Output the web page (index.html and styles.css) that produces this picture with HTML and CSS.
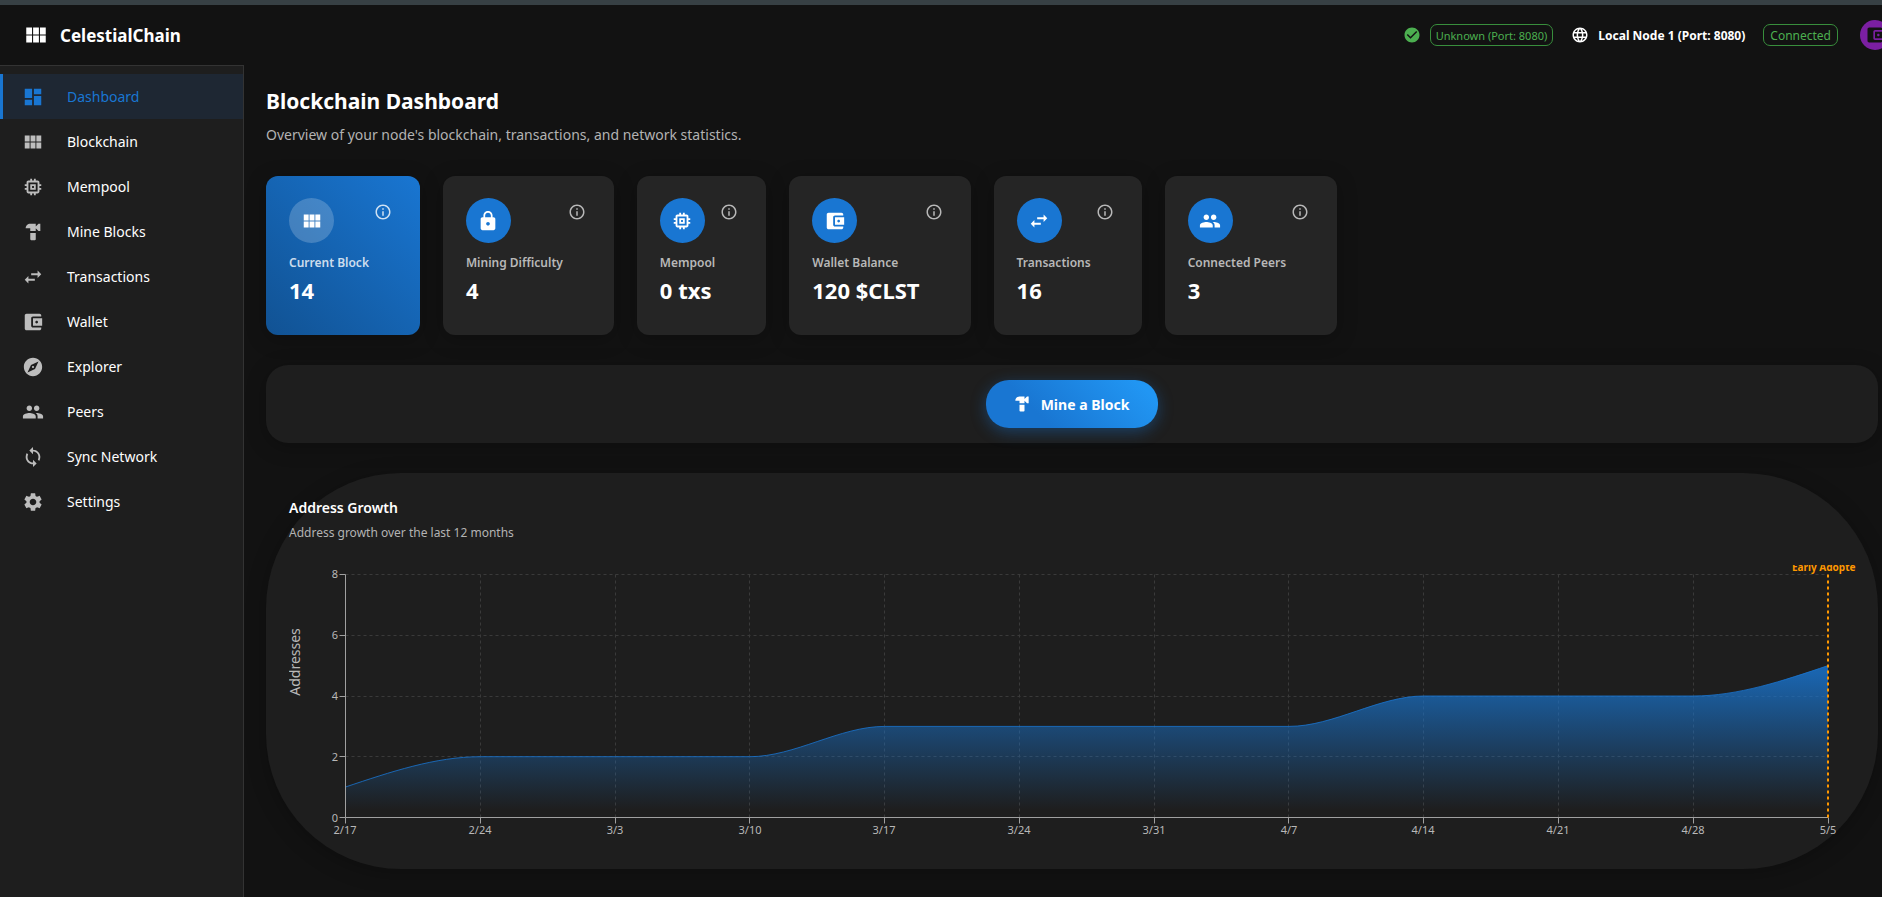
FILE: index.html
```html
<!DOCTYPE html>
<html lang="en">
<head>
<meta charset="utf-8">
<meta name="viewport" content="width=device-width, initial-scale=1">
<title>CelestialChain</title>
<link rel="stylesheet" href="styles.css">
</head>
<body>
<svg class="sprite" aria-hidden="true">
  <symbol id="i-dashboard" viewBox="0 0 24 24"><path d="M3 13h8V3H3v10zm0 8h8v-6H3v6zm10 0h8V11h-8v10zm0-18v6h8V3h-8z"/></symbol>
  <symbol id="i-blocks" viewBox="0 0 24 24"><path d="M14.67 5v6.5H9.33V5h5.34zm1 6.5H21V5h-5.33v6.5zm-1 7.5v-6.5H9.33V19h5.34zm1-6.5V19H21v-6.5h-5.33zm-7.34 0H3V19h5.33v-6.5zm0-1V5H3v6.5h5.33z"/></symbol>
  <symbol id="i-memory" viewBox="0 0 24 24"><path d="M15 9H9v6h6V9zm-2 4h-2v-2h2v2zm8-2V9h-2V7c0-1.100-.9-2-2-2h-2V3h-2v2h-2V3H9v2H7c-1.100 0-2 .9-2 2v2H3v2h2v2H3v2h2v2c0 1.100.9 2 2 2h2v2h2v-2h2v2h2v-2h2c1.100 0 2-.9 2-2v-2h2v-2h-2v-2h2zm-4 6H7V7h10v10z"/></symbol>
  <symbol id="i-hammer" viewBox="0 0 24 24"><path d="m18 3-3 3V3H9C6.240 3 4 5.240 4 8h5v3h6V8l3 3h2V3zM9 13v7c0 .55.45 1 1 1h4c.55 0 1-.45 1-1v-7z"/></symbol>
  <symbol id="i-swap" viewBox="0 0 24 24"><path d="M6.990 11 3 15l3.990 4v-3H14v-2H6.990v-3zM21 9l-3.990-4v3H10v2h7.010v3L21 9z"/></symbol>
  <symbol id="i-wallet" viewBox="0 0 24 24"><path d="M21 18v1c0 1.100-.9 2-2 2H5c-1.110 0-2-.9-2-2V5c0-1.100.89-2 2-2h14c1.100 0 2 .9 2 2v1h-9c-1.110 0-2 .9-2 2v8c0 1.100.89 2 2 2h9zm-9-2h10V8H12v8zm4-2.500c-.83 0-1.500-.67-1.500-1.500s.67-1.500 1.500-1.500 1.500.67 1.500 1.500-.67 1.500-1.500 1.500z"/></symbol>
  <symbol id="i-explore" viewBox="0 0 24 24"><path d="M12 10.900c-.61 0-1.100.49-1.100 1.100s.49 1.100 1.100 1.100c.61 0 1.100-.49 1.100-1.100s-.49-1.100-1.100-1.100zM12 2C6.480 2 2 6.480 2 12s4.480 10 10 10 10-4.480 10-10S17.520 2 12 2zm2.190 12.190L6 18l3.810-8.190L18 6l-3.810 8.190z"/></symbol>
  <symbol id="i-people" viewBox="0 0 24 24"><path d="M16 11c1.660 0 2.990-1.340 2.990-3S17.660 5 16 5c-1.660 0-3 1.340-3 3s1.340 3 3 3zm-8 0c1.660 0 2.990-1.340 2.990-3S9.660 5 8 5C6.340 5 5 6.340 5 8s1.340 3 3 3zm0 2c-2.330 0-7 1.170-7 3.500V19h14v-2.500c0-2.330-4.670-3.500-7-3.500zm8 0c-.29 0-.62.02-.97.05 1.160.84 1.970 1.970 1.970 3.450V19h6v-2.500c0-2.330-4.670-3.500-7-3.500z"/></symbol>
  <symbol id="i-sync" viewBox="0 0 24 24"><path d="M12 4V1L8 5l4 4V6c3.310 0 6 2.690 6 6 0 1.010-.25 1.970-.7 2.800l1.460 1.460C19.540 15.030 20 13.570 20 12c0-4.420-3.580-8-8-8zm0 14c-3.310 0-6-2.690-6-6 0-1.010.25-1.970.7-2.800L5.240 7.740C4.460 8.970 4 10.430 4 12c0 4.420 3.580 8 8 8v3l4-4-4-4v3z"/></symbol>
  <symbol id="i-settings" viewBox="0 0 24 24"><path d="M19.140 12.940c.04-.3.06-.61.06-.94 0-.32-.02-.64-.07-.94l2.030-1.580c.18-.14.23-.41.12-.61l-1.920-3.320c-.12-.22-.37-.29-.59-.22l-2.390.96c-.5-.38-1.030-.7-1.620-.94l-.36-2.540c-.04-.24-.24-.41-.48-.41h-3.840c-.24 0-.43.17-.47.41l-.36 2.540c-.59.24-1.130.57-1.620.94l-2.390-.96c-.22-.08-.47 0-.59.22L2.740 8.870c-.12.21-.08.47.12.61l2.030 1.580c-.05.3-.09.63-.09.94s.02.64.07.94l-2.030 1.580c-.18.14-.23.41-.12.61l1.920 3.320c.12.22.37.29.59.22l2.390-.96c.5.38 1.030.7 1.620.94l.36 2.540c.05.24.24.41.48.41h3.840c.24 0 .44-.17.47-.41l.36-2.540c.59-.24 1.130-.56 1.620-.94l2.390.96c.22.08.47 0 .59-.22l1.920-3.320c.12-.22.07-.47-.12-.61l-2.010-1.580zM12 15.600c-1.980 0-3.600-1.620-3.600-3.600s1.620-3.600 3.600-3.600 3.600 1.620 3.600 3.600-1.620 3.600-3.600 3.600z"/></symbol>
  <symbol id="i-lock" viewBox="0 0 24 24"><path d="M18 8h-1V6c0-2.760-2.240-5-5-5S7 3.240 7 6v2H6c-1.100 0-2 .9-2 2v10c0 1.100.9 2 2 2h12c1.100 0 2-.9 2-2V10c0-1.100-.9-2-2-2zm-6 9c-1.100 0-2-.9-2-2s.9-2 2-2 2 .9 2 2-.9 2-2 2zm3.100-9H8.900V6c0-1.710 1.390-3.100 3.100-3.100 1.710 0 3.100 1.390 3.100 3.100v2z"/></symbol>
  <symbol id="i-info" viewBox="0 0 24 24"><path d="M11 7h2v2h-2zm0 4h2v6h-2zm1-9C6.480 2 2 6.480 2 12s4.480 10 10 10 10-4.480 10-10S17.520 2 12 2zm0 18c-4.410 0-8-3.590-8-8s3.590-8 8-8 8 3.590 8 8-3.590 8-8 8z"/></symbol>
  <symbol id="i-check" viewBox="0 0 24 24"><path d="M12 2C6.480 2 2 6.480 2 12s4.480 10 10 10 10-4.480 10-10S17.520 2 12 2zm-2 15-5-5 1.410-1.410L10 14.170l7.590-7.590L19 8l-9 9z"/></symbol>
  <symbol id="i-globe" viewBox="0 0 24 24"><path d="M11.990 2C6.470 2 2 6.480 2 12s4.470 10 9.990 10C17.520 22 22 17.520 22 12S17.520 2 11.990 2zm6.930 6h-2.950c-.32-1.250-.78-2.450-1.380-3.560 1.840.63 3.370 1.910 4.330 3.560zM12 4.040c.83 1.200 1.480 2.530 1.910 3.960h-3.820c.43-1.430 1.080-2.760 1.910-3.960zM4.260 14C4.100 13.360 4 12.690 4 12s.1-1.360.26-2h3.380c-.08.66-.14 1.320-.14 2s.06 1.340.14 2H4.260zm.82 2h2.950c.32 1.250.78 2.450 1.380 3.560-1.840-.63-3.370-1.900-4.330-3.560zm2.950-8H5.080c.96-1.660 2.490-2.930 4.330-3.560C8.810 5.550 8.350 6.750 8.030 8zM12 19.960c-.83-1.200-1.480-2.530-1.910-3.960h3.820c-.43 1.430-1.080 2.760-1.910 3.960zM14.340 14H9.660c-.09-.66-.16-1.320-.16-2s.07-1.350.16-2h4.680c.09.65.16 1.320.16 2s-.07 1.340-.16 2zm.25 5.560c.6-1.110 1.060-2.310 1.380-3.560h2.950c-.96 1.650-2.490 2.930-4.330 3.560zM16.360 14c.08-.66.14-1.320.14-2s-.06-1.340-.14-2h3.380c.16.64.26 1.310.26 2s-.1 1.360-.26 2h-3.380z"/></symbol>
</svg>

<header class="topbar">
  <div class="brand">
    <svg class="icon icon-xl"><use href="#i-blocks"/></svg>
    <span class="brand-name">CelestialChain</span>
  </div>
  <div class="status">
    <div class="status-group">
      <svg class="icon icon-sm ok"><use href="#i-check"/></svg>
      <span class="chip chip-small">Unknown (Port: 8080)</span>
    </div>
    <div class="status-group">
      <svg class="icon icon-sm"><use href="#i-globe"/></svg>
      <span class="node-name">Local Node 1 (Port: 8080)</span>
    </div>
    <span class="chip">Connected</span>
    <button class="avatar" type="button" aria-label="Wallet"><svg class="icon icon-md"><use href="#i-wallet"/></svg></button>
  </div>
</header>

<div class="layout">
  <nav class="sidebar">
    <a class="nav-item active" href="#dashboard"><svg class="icon icon-lg"><use href="#i-dashboard"/></svg>Dashboard</a>
    <a class="nav-item" href="#blockchain"><svg class="icon icon-lg"><use href="#i-blocks"/></svg>Blockchain</a>
    <a class="nav-item" href="#mempool"><svg class="icon icon-lg"><use href="#i-memory"/></svg>Mempool</a>
    <a class="nav-item" href="#mine"><svg class="icon icon-lg"><use href="#i-hammer"/></svg>Mine Blocks</a>
    <a class="nav-item" href="#transactions"><svg class="icon icon-lg"><use href="#i-swap"/></svg>Transactions</a>
    <a class="nav-item" href="#wallet"><svg class="icon icon-lg"><use href="#i-wallet"/></svg>Wallet</a>
    <a class="nav-item" href="#explorer"><svg class="icon icon-lg"><use href="#i-explore"/></svg>Explorer</a>
    <a class="nav-item" href="#peers"><svg class="icon icon-lg"><use href="#i-people"/></svg>Peers</a>
    <a class="nav-item" href="#sync"><svg class="icon icon-lg"><use href="#i-sync"/></svg>Sync Network</a>
    <a class="nav-item" href="#settings"><svg class="icon icon-lg"><use href="#i-settings"/></svg>Settings</a>
  </nav>

  <main class="content">
    <h1 class="page-title">Blockchain Dashboard</h1>
    <p class="page-subtitle">Overview of your node's blockchain, transactions, and network statistics.</p>

    <section class="cards">
      <article class="card primary">
        <div class="card-body">
          <span class="badge"><svg class="icon icon-lg"><use href="#i-blocks"/></svg></span>
          <span class="card-label">Current Block</span>
          <strong class="card-value">14</strong>
        </div>
        <button class="info" type="button" aria-label="About current block"><svg class="icon icon-sm"><use href="#i-info"/></svg></button>
      </article>
      <article class="card">
        <div class="card-body">
          <span class="badge"><svg class="icon icon-lg"><use href="#i-lock"/></svg></span>
          <span class="card-label">Mining Difficulty</span>
          <strong class="card-value">4</strong>
        </div>
        <button class="info" type="button" aria-label="About mining difficulty"><svg class="icon icon-sm"><use href="#i-info"/></svg></button>
      </article>
      <article class="card">
        <div class="card-body">
          <span class="badge"><svg class="icon icon-lg"><use href="#i-memory"/></svg></span>
          <span class="card-label">Mempool</span>
          <strong class="card-value">0 txs</strong>
        </div>
        <button class="info" type="button" aria-label="About mempool"><svg class="icon icon-sm"><use href="#i-info"/></svg></button>
      </article>
      <article class="card">
        <div class="card-body">
          <span class="badge"><svg class="icon icon-lg"><use href="#i-wallet"/></svg></span>
          <span class="card-label">Wallet Balance</span>
          <strong class="card-value">120 $CLST</strong>
        </div>
        <button class="info" type="button" aria-label="About wallet balance"><svg class="icon icon-sm"><use href="#i-info"/></svg></button>
      </article>
      <article class="card">
        <div class="card-body">
          <span class="badge"><svg class="icon icon-lg"><use href="#i-swap"/></svg></span>
          <span class="card-label">Transactions</span>
          <strong class="card-value">16</strong>
        </div>
        <button class="info" type="button" aria-label="About transactions"><svg class="icon icon-sm"><use href="#i-info"/></svg></button>
      </article>
      <article class="card">
        <div class="card-body">
          <span class="badge"><svg class="icon icon-lg"><use href="#i-people"/></svg></span>
          <span class="card-label">Connected Peers</span>
          <strong class="card-value">3</strong>
        </div>
        <button class="info" type="button" aria-label="About connected peers"><svg class="icon icon-sm"><use href="#i-info"/></svg></button>
      </article>
    </section>

    <section class="actions">
      <button class="mine" type="button"><svg class="icon icon-md"><use href="#i-hammer"/></svg>Mine a Block</button>
    </section>

    <section class="growth">
      <h2 class="growth-title">Address Growth</h2>
      <p class="growth-subtitle">Address growth over the last 12 months</p>
      <svg class="chart" viewBox="0 0 1567 282" role="img" aria-label="Address growth">
        <defs>
          <linearGradient id="area" x1="0" y1="0" x2="0" y2="1">
            <stop offset="5%" stop-color="#1976d2" stop-opacity="0.8"/>
            <stop offset="95%" stop-color="#1976d2" stop-opacity="0"/>
          </linearGradient>
        </defs>
        <path class="grid" d="M56.5 9.500H1539M56.5 70.500H1539M56.5 131.500H1539M56.5 191.500H1539"/>
        <path class="grid" d="M191.500 9.500V252M326.500 9.500V252M460.500 9.500V252M595.500 9.500V252M730.500 9.500V252M865.500 9.500V252M999.500 9.500V252M1134.500 9.500V252M1269.500 9.500V252M1404.500 9.500V252"/>
        <path fill="url(#area)" d="M56.500 222C101.400 207 146.400 191.700 191.300 191.700H460.800C505.700 191.700 550.700 161.400 595.600 161.400H999.900C1044.800 161.400 1089.800 131 1134.700 131H1404.200C1449 131 1494 115.800 1539 100.600V252.500H56.500Z"/>
        <path class="line" d="M56.500 222C101.400 207 146.400 191.700 191.300 191.700H460.800C505.700 191.700 550.700 161.400 595.600 161.400H999.900C1044.800 161.400 1089.800 131 1134.700 131H1404.200C1449 131 1494 115.800 1539 100.600"/>
        <path class="axis" d="M56.500 9.500V252.500H1539M50.500 9.500h6M50.500 70.500h6M50.500 131.500h6M50.500 191.500h6M50.500 252.500h6M56.500 252.500v6M191.500 252.500v6M326.500 252.500v6M460.500 252.500v6M595.500 252.500v6M730.500 252.500v6M865.500 252.500v6M999.500 252.500v6M1134.500 252.500v6M1269.500 252.500v6M1404.500 252.500v6M1539.500 252.500v6"/>
        <path class="marker" d="M1539 9.500V253"/>
        <g class="ticks ticks-y">
          <text x="49" y="13">8</text><text x="49" y="74">6</text><text x="49" y="135">4</text><text x="49" y="196">2</text><text x="49" y="257">0</text>
        </g>
        <g class="ticks">
          <text x="56" y="269">2/17</text><text x="191" y="269">2/24</text><text x="326" y="269">3/3</text><text x="461" y="269">3/10</text><text x="595" y="269">3/17</text><text x="730" y="269">3/24</text><text x="865" y="269">3/31</text><text x="1000" y="269">4/7</text><text x="1134" y="269">4/14</text><text x="1269" y="269">4/21</text><text x="1404" y="269">4/28</text><text x="1539" y="269">5/5</text>
        </g>
        <text class="axis-title" transform="translate(11 97) rotate(-90)">Addresses</text>
        <text class="marker-label" x="1537" y="6">Early Adopter</text>
      </svg>
    </section>
  </main>
</div>
</body>
</html>
```
FILE: styles.css
```css
* { box-sizing: border-box; }

body {
  margin: 0;
  min-height: 100vh;
  display: flex;
  flex-direction: column;
  overflow-x: hidden;
  background: #121212;
  border-top: 5px solid #374044;
  color: #fff;
  font-family: "Segoe UI", "Noto Sans", sans-serif;
  font-size: 14px;
}

h1, h2, p { margin: 0; }
button { border: 0; padding: 0; font: inherit; color: inherit; cursor: pointer; }

.sprite { position: absolute; width: 0; height: 0; }
.icon { display: block; flex: none; fill: currentColor; }
.icon-sm { width: 18px; height: 18px; }
.icon-md { width: 20px; height: 20px; }
.icon-lg { width: 22px; height: 22px; }
.icon-xl { width: 26px; height: 26px; }

.topbar {
  display: flex;
  align-items: center;
  justify-content: space-between;
  height: 60px;
  padding-left: 23px;
}
.brand { display: flex; align-items: center; gap: 11px; }
.brand-name { font-size: 17px; font-weight: 700; }

.status { display: flex; align-items: center; gap: 18px; margin-right: -8px; }
.status-group { display: flex; align-items: center; gap: 9px; }
.ok { color: #4caf50; }
.chip {
  display: flex;
  align-items: center;
  height: 22px;
  padding: 0 6px;
  border: 1px solid #388e3c;
  border-radius: 7px;
  color: #4caf50;
  font-size: 12px;
}
.chip-small { padding: 0 5px; font-size: 11px; }
.node-name { font-size: 12px; font-weight: 700; }
.avatar {
  display: flex;
  align-items: center;
  justify-content: center;
  width: 30px;
  height: 30px;
  margin-left: 4px;
  border-radius: 50%;
  background: #7b1fa2;
  color: #121212;
}

.layout { display: flex; flex: 1; }

.sidebar {
  flex: none;
  width: 244px;
  padding-top: 8px;
  background: #1e1e1e;
  border-top: 1px solid #333;
  border-right: 1px solid #333;
}
.nav-item {
  display: flex;
  align-items: center;
  gap: 23px;
  height: 45px;
  padding-left: 19px;
  border-left: 3px solid transparent;
  color: #fff;
  font-size: 14px;
  text-decoration: none;
}
.nav-item .icon { color: #bdbdbd; }
.nav-item.active { background: #1e2733; border-left-color: #1976d2; color: #1976d2; }
.nav-item.active .icon { color: #1976d2; }

.content { flex: 1; min-width: 0; padding: 21px 4px 24px 22px; }
.page-title { font-size: 21px; line-height: 30px; font-weight: 700; }
.page-subtitle { margin-top: 7px; color: #b3b3b3; font-size: 14px; line-height: 24px; }

.cards { display: flex; flex-wrap: wrap; gap: 23px; margin-top: 29px; }
.card {
  display: flex;
  min-height: 159px;
  padding: 22px 23px;
  border-radius: 12px;
  background: #252525;
  box-shadow: 0 4px 20px rgba(0, 0, 0, 0.25);
  color: #b8b8b8;
}
.card.primary { background: linear-gradient(45deg, #115293, #1976d2); color: rgba(255, 255, 255, 0.8); }
.card-body { display: flex; flex-direction: column; align-items: flex-start; }
.badge {
  display: flex;
  align-items: center;
  justify-content: center;
  width: 45px;
  height: 45px;
  border-radius: 50%;
  background: #1976d2;
  color: #fff;
}
.primary .badge { background: rgba(255, 255, 255, 0.2); }
.card-label { margin-top: 10px; font-size: 12px; line-height: 20px; font-weight: 600; }
.card-value { margin-top: 2px; color: #fff; font-size: 22px; line-height: 30px; font-weight: 700; }
.info {
  display: flex;
  align-items: center;
  justify-content: center;
  width: 28px;
  height: 28px;
  background: none;
}

.actions {
  display: flex;
  justify-content: center;
  margin-top: 30px;
  padding: 15px;
  border-radius: 22px;
  background: #1e1e1e;
  box-shadow: 0 4px 20px rgba(0, 0, 0, 0.25);
}
.mine {
  display: flex;
  align-items: center;
  gap: 9px;
  height: 48px;
  padding: 0 29px 0 26px;
  border-radius: 23px;
  background: linear-gradient(45deg, #1976d2 30%, #2196f3 90%);
  box-shadow: 0 4px 15px rgba(25, 118, 210, 0.4);
  font-size: 14px;
  font-weight: 700;
}

.growth {
  margin-top: 30px;
  padding: 22px 22px 22px 23px;
  border-radius: 135px;
  background: #1e1e1e;
  box-shadow: 0 4px 20px rgba(0, 0, 0, 0.25);
}
.growth-title { font-size: 14px; line-height: 26px; font-weight: 600; }
.growth-subtitle { margin-bottom: 20px; color: #b3b3b3; font-size: 12px; line-height: 24px; }

.chart { display: block; width: 100%; height: auto; overflow: hidden; }
.grid { fill: none; stroke: #3a3a3a; stroke-dasharray: 3 3; }
.line { fill: none; stroke: #1976d2; stroke-opacity: 0.8; }
.axis { fill: none; stroke: #a0a0a0; }
.marker { stroke: #ff9800; stroke-width: 2; stroke-dasharray: 3 3; }
.ticks { fill: #b8b8b8; font-size: 11px; text-anchor: middle; }
.ticks-y { text-anchor: end; }
.axis-title { fill: #b8b8b8; font-size: 14px; text-anchor: middle; }
.marker-label { fill: #ff9800; font-size: 10px; font-weight: 700; text-anchor: middle; }
```
